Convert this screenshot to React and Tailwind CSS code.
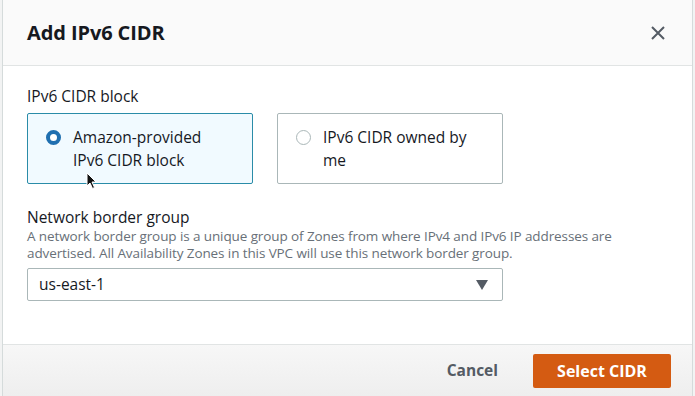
import React from 'react';

const App = () => {
  return (
    <div className="w-[695px] h-[396px] bg-[#f2f3f3] overflow-hidden" style={{ fontFamily: '"Open Sans", "Noto Sans", sans-serif' }}>
      <div className="ml-[2px] w-[691px] h-[396px] border-x border-[#d5dbdb] bg-white flex flex-col">
        <div className="h-[66px] shrink-0 bg-[#fafafa] border-b border-[#e1e4e4] flex items-center justify-between pl-[24px] pr-[26px]">
          <h2 className="text-[20px] font-bold text-[#16191f] tracking-[-0.1px]">Add IPv6 CIDR</h2>
          <svg width="16" height="16" viewBox="0 0 16 16" className="text-[#545b64]">
            <path d="M2 2 L14 14 M14 2 L2 14" stroke="currentColor" strokeWidth="2" fill="none" />
          </svg>
        </div>
        <div className="flex-1 px-[24px] pt-[19px]">
          <div className="text-[15.5px] text-[#16191f] leading-[22px]">IPv6 CIDR block</div>
          <div className="mt-[6px] flex gap-[24px]">
            <div className="relative w-[226px] h-[71px] border border-[#2a8ca8] rounded-[2px] bg-[#f1faff] flex items-start pl-[18px] pt-[12px]">
              <span className="mt-[4px] w-[15px] h-[15px] rounded-full border-[4px] border-[#1f6fb0] bg-white shrink-0" />
              <span className="ml-[12px] text-[15.5px] leading-[23px] text-[#16191f]">Amazon-provided<br />IPv6 CIDR block</span>
              <svg className="absolute left-[58px] top-[58px]" width="12" height="18" viewBox="0 0 12 18">
                <path d="M1 1 L1 14 L4 11 L6.5 16.5 L8.5 15.5 L6 10 L10 10 Z" fill="#111" stroke="#fff" strokeWidth="1" />
              </svg>
            </div>
            <div className="w-[226px] h-[71px] border border-[#aab7b8] rounded-[2px] bg-white flex items-start pl-[18px] pt-[12px]">
              <span className="mt-[4px] w-[15px] h-[15px] rounded-full border border-[#aab7b8] bg-white shrink-0" />
              <span className="ml-[12px] text-[15.5px] leading-[23px] text-[#16191f]">IPv6 CIDR owned by<br />me</span>
            </div>
          </div>
          <div className="mt-[22px] text-[15.5px] text-[#16191f] leading-[22px]">Network border group</div>
          <div className="text-[13.5px] leading-[16.5px] text-[#687078] tracking-[-0.1px]">
            <div>A network border group is a unique group of Zones from where IPv4 and IPv6 IP addresses are</div>
            <div>advertised. All Availability Zones in this VPC will use this network border group.</div>
          </div>
          <div className="mt-[7px] w-[476px] h-[33px] border border-[#aab7b8] rounded-[2px] bg-white flex items-center justify-between pl-[11px] pr-[14px]">
            <span className="text-[15.5px] text-[#16191f]">us-east-1</span>
            <svg width="12" height="10" viewBox="0 0 12 10">
              <path d="M0 0 L12 0 L6 10 Z" fill="#545b64" />
            </svg>
          </div>
        </div>
        <div className="h-[52px] shrink-0 border-t border-[#e1e4e4] bg-gradient-to-b from-[#f7f7f7] to-[#eeeeee] flex items-center justify-end pr-[21px] gap-[35px]">
          <span className="text-[15.5px] font-bold text-[#545b64]">Cancel</span>
          <button className="w-[138px] h-[34px] rounded-[2px] bg-[#d45b12] text-white text-[16px] font-bold">Select CIDR</button>
        </div>
      </div>
    </div>
  );
};

export default App;
